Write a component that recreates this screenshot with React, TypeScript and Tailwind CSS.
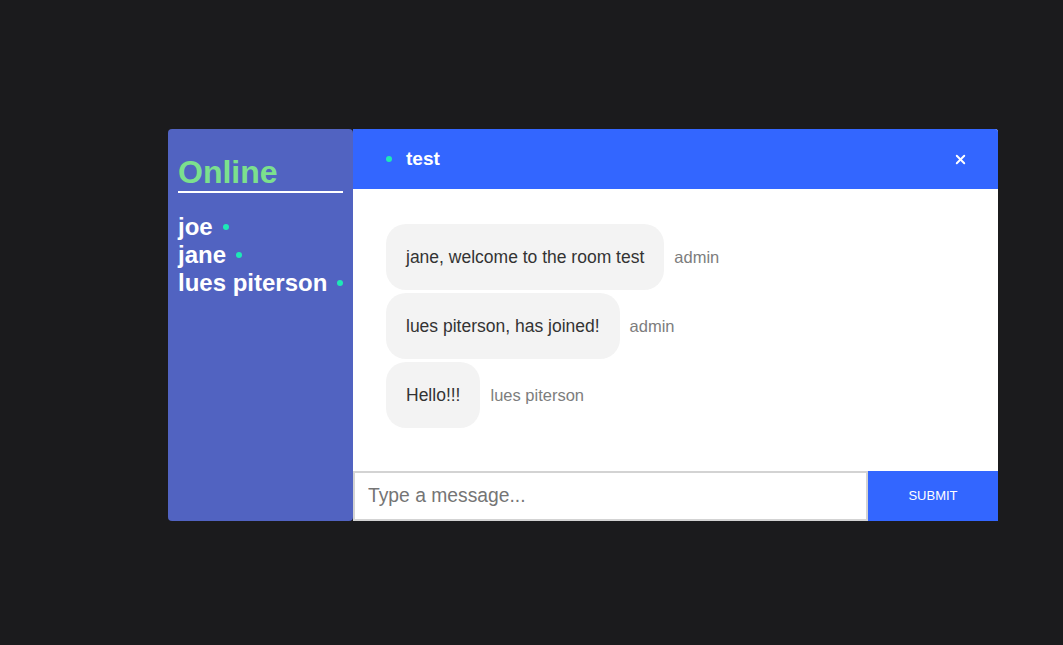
import { X } from "lucide-react";

const users = ["joe", "jane", "lues piterson"];

const messages = [
  { text: "jane, welcome to the room test", user: "admin" },
  { text: "lues piterson, has joined!", user: "admin" },
  { text: "Hello!!!", user: "lues piterson" },
];

export default function App() {
  return (
    <div className="w-full h-[645px] bg-[#1b1b1d] flex font-['Liberation_Sans',Arial,sans-serif] pt-[129px] pl-[168px]">
      <div className="flex h-[392px]">
        {/* Sidebar */}
        <div className="w-[185px] shrink-0 h-full bg-[#5163c1] rounded-[4px] px-[10px] pt-[25px]">
          <h1 className="text-[32px] leading-[36px] font-bold text-[#7ce08d] border-b-2 border-white pb-[1px]">Online</h1>
          <ul className="mt-[20px]">
            {users.map((u) => (
              <li key={u} className="flex items-center whitespace-nowrap text-[24px] leading-[28px] font-bold text-white">
                {u}
                <span className="ml-[10px] shrink-0 w-[6px] h-[6px] rounded-full bg-[#1de9b6]" />
              </li>
            ))}
          </ul>
        </div>

        {/* Chat */}
        <div className="w-[645px] h-full flex flex-col bg-white rounded-tr-[3px] overflow-hidden">
          <div className="h-[60px] bg-[#3366ff] flex items-center px-[33px]">
            <span className="w-[6px] h-[6px] rounded-full bg-[#1de9b6]" />
            <span className="ml-[14px] text-[19px] font-bold text-white">test</span>
            <X size={15} strokeWidth={3} className="ml-auto mr-[-3px] text-white" />
          </div>

          <div className="flex-1 flex flex-col gap-[3px] pt-[35px] pl-[33px]">
            {messages.map((m, i) => (
              <div key={i} className="flex items-center">
                <div className="bg-[#f3f3f3] rounded-[20px] px-[20px] py-[20px] text-[17.5px] leading-[26px] text-[#333]">
                  {m.text}
                </div>
                <span className="ml-[10px] text-[16.5px] text-[#7d7d7d]">{m.user}</span>
              </div>
            ))}
          </div>

          <div className="h-[50px] flex">
            <input
              type="text"
              placeholder="Type a message..."
              className="flex-1 border-2 border-[#d3d3d3] px-[13px] text-[19.3px] text-[#333] placeholder:text-[#757575] outline-none"
            />
            <button className="w-[130px] bg-[#3366ff] text-white text-[13px]">SUBMIT</button>
          </div>
        </div>
      </div>
    </div>
  );
}
